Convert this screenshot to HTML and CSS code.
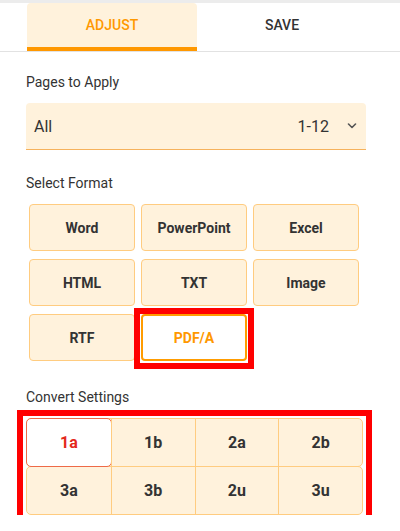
FILE: index.html
```html
<!DOCTYPE html>
<html lang="en">

<head>
    <meta charset="UTF-8">
    <title>Convert PDF</title>
    <link rel="stylesheet" href="styles.css">
</head>

<body>
    <div class="topbar"></div>

    <!-- Вкладки -->
    <div class="tabs">
        <div class="tab active">ADJUST</div>
        <div class="tab">SAVE</div>
    </div>

    <div class="panel">
        <div class="label">Pages to Apply</div>
        <div class="select">
            <span class="select-value">All</span>
            <span class="select-range">1-12</span>
            <svg class="chevron" width="10" height="6" viewBox="0 0 10 6" fill="none" stroke="#555"
                stroke-width="1.6" stroke-linecap="round" stroke-linejoin="round">
                <polyline points="1.5,1 5,4.5 8.5,1"></polyline>
            </svg>
        </div>

        <div class="label">Select Format</div>
        <div class="formats">
            <button class="format">Word</button>
            <button class="format">PowerPoint</button>
            <button class="format">Excel</button>
            <button class="format">HTML</button>
            <button class="format">TXT</button>
            <button class="format">Image</button>
            <button class="format">RTF</button>
            <button class="format active marked">PDF/A</button>
        </div>

        <div class="label label-convert">Convert Settings</div>
        <div class="settings marked">
            <div class="seg-row">
                <button class="seg active">1a</button>
                <button class="seg">1b</button>
                <button class="seg">2a</button>
                <button class="seg">2b</button>
            </div>
            <div class="seg-row">
                <button class="seg">3a</button>
                <button class="seg">3b</button>
                <button class="seg">2u</button>
                <button class="seg">3u</button>
            </div>
        </div>
    </div>
</body>

</html>
```

FILE: styles.css
```css
body {
    margin: 0;
    padding: 0;
    font-family: Roboto, 'Noto Sans', sans-serif;
    background-color: #fff;
    color: #333;
}

.topbar {
    height: 3px;
    background-color: #ececec;
}

/* Вкладки */
.tabs {
    display: flex;
    padding-left: 27px;
    border-bottom: 1px solid #e2e2e2;
}

.tab {
    width: 170px;
    height: 44px;
    display: flex;
    align-items: center;
    justify-content: center;
    border-bottom: 4px solid transparent;
    border-radius: 4px 4px 0 0;
    font-size: 14px;
    font-weight: 500;
    color: #333;
}

.tab.active {
    background-color: #fff2dc;
    color: #ff9800;
    border-bottom-color: #ff9800;
}

.panel {
    padding: 0 26px;
}

.label {
    margin-top: 20px;
    font-size: 14px;
    line-height: 20px;
    color: #333;
}

/* Выпадающий список */
.select {
    display: flex;
    align-items: center;
    width: 340px;
    height: 47px;
    box-sizing: content-box;
    margin-top: 11px;
    padding: 0 9px 0 8px;
    box-sizing: border-box;
    background-color: #fff2dc;
    border-bottom: 1px solid #f6b25c;
    border-radius: 4px 4px 0 0;
    font-size: 16px;
    color: #333;
}

.select-value {
    flex: 1;
}

.select-range {
    margin-right: 18px;
}

.select + .label {
    margin-top: 23px;
}

/* Кнопки форматов */
.formats {
    display: grid;
    grid-template-columns: repeat(3, 106px);
    column-gap: 6px;
    row-gap: 8px;
    margin: 11px 0 0 3px;
}

.format {
    position: relative;
    height: 47px;
    padding: 0;
    background-color: #fff2dc;
    border: 1px solid #ffcc80;
    border-radius: 4px;
    font-family: inherit;
    font-size: 14px;
    font-weight: 700;
    color: #333;
}

.format.active {
    background-color: #fff;
    border: 2px solid #ff9c00;
    color: #ff9800;
}

.label-convert {
    margin-top: 26px;
}

/* Переключатели настроек */
.settings {
    position: relative;
    width: 337px;
    margin-top: 11px;
}

.seg-row {
    display: grid;
    grid-template-columns: repeat(4, 1fr);
    height: 47px;
    background-color: #fff2dc;
    border: 1px solid #ffcc80;
    border-radius: 5px;
}

.seg-row + .seg-row {
    margin-top: -1px;
}

.seg {
    padding: 0;
    background: none;
    border: none;
    border-left: 1px solid #ffcc80;
    font-family: inherit;
    font-size: 16px;
    font-weight: 700;
    color: #333;
}

.seg:first-child {
    border-left: none;
}

.seg.active {
    margin: -1px;
    background-color: #fff;
    border: 1px solid #ee6a48;
    border-radius: 5px;
    color: #e4281c;
}

/* Красные рамки-пометки */
.marked::after {
    content: "";
    position: absolute;
    top: -8px;
    left: -9px;
    right: -9px;
    bottom: -10px;
    border: 6px solid #ff0000;
    pointer-events: none;
}

.settings.marked::after {
    bottom: -9px;
}
```
